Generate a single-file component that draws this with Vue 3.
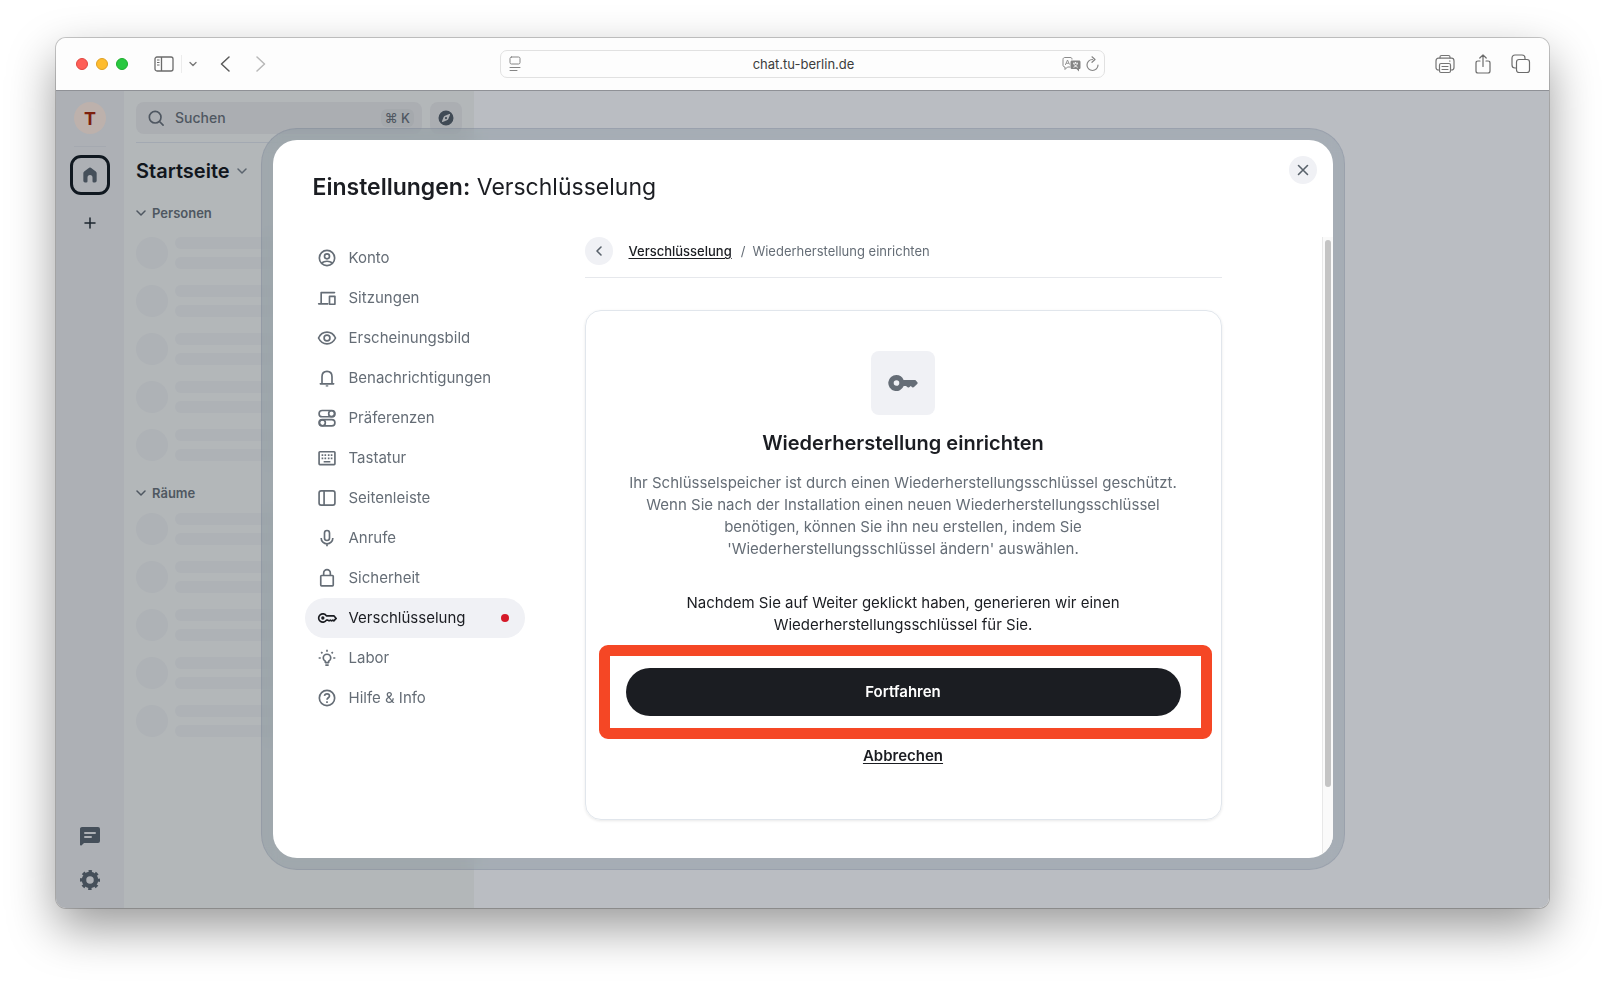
<template>
  <div class="desktop">
    <div class="browser">
      <header class="toolbar">
        <div class="toolbar-left">
          <span class="light red"></span>
          <span class="light yellow"></span>
          <span class="light green"></span>
          <button class="tool sidebar-toggle" aria-label="Seitenleiste einblenden">
            <svg width="20" height="16" viewBox="0 0 20 16" fill="none" stroke="#6b6b6b">
              <rect x="1" y="1" width="18" height="14" rx="2" stroke-width="1.3" />
              <path d="M7.5 1v14" stroke-width="1.3" />
              <path d="M3 4h2.500M3 6.500h2.500M3 9h2.500" />
            </svg>
          </button>
          <span class="separator"></span>
          <button class="tool group-menu" aria-label="Tabgruppen">
            <svg width="8" height="6" viewBox="0 0 8 6" fill="none" stroke="#7a7a7a" stroke-width="1.4" stroke-linecap="round" stroke-linejoin="round"><path d="M1 1.500l3 3 3-3" /></svg>
          </button>
          <button class="tool go-back" aria-label="Zurück">
            <svg width="10" height="16" viewBox="0 0 10 16" fill="none" stroke="#5a5a5a" stroke-width="1.5" stroke-linecap="round" stroke-linejoin="round"><path d="M9 1L1.500 8 9 15" /></svg>
          </button>
          <button class="tool" aria-label="Vorwärts">
            <svg width="10" height="16" viewBox="0 0 10 16" fill="none" stroke="#b8b8b8" stroke-width="1.5" stroke-linecap="round" stroke-linejoin="round"><path d="M1 1l7.500 7L1 15" /></svg>
          </button>
        </div>

        <div class="address-bar">
          <svg width="12" height="16" viewBox="0 0 12 16" fill="none" stroke="#858585" stroke-linecap="round"><rect x="1" y="1" width="10" height="7" rx="1.500" /><path d="M1 11.500h10M1 14.500h7" /></svg>
          <input type="text" value="chat.tu-berlin.de" aria-label="Adresse" />
          <svg width="19" height="16" viewBox="0 0 19 16" fill="none">
            <path d="M8 11H5.500L3 13.500V11C1.500 11 1 10 1 9V3.500C1 2 2 1.500 3 1.500h5c1.500 0 2 .5 2 2" stroke="#8a8a8a" />
            <path d="M3.300 9L5.500 4 7.500 8.500M4.200 7.300h2.600" stroke="#8a8a8a" stroke-width=".9" />
            <path d="M10 4.500h7c1 0 1.500.7 1.500 1.500v5.500c0 1-.5 1.500-1.500 1.500v2.500L14.500 13H10c-1 0-1.500-.6-1.500-1.500V6c0-.9.500-1.500 1.500-1.500z" fill="#858585" />
            <path d="M11 7.200h5M13.500 6v1.200M15.500 7.500c-.7 1.800-2 3-4 3.800M11.700 7.500c.7 1.800 2 3 4 3.800" stroke="#fff" stroke-width=".9" />
          </svg>
          <button class="tool reload" aria-label="Neu laden">
            <svg width="13" height="16" viewBox="0 0 13 16" fill="none" stroke="#858585" stroke-width="1.2" stroke-linecap="round" stroke-linejoin="round"><path d="M6.500 3.500a5.500 5.500 0 1 0 5.500 5.500M6 .8l3 2.700-3 2.800" /></svg>
          </button>
        </div>

        <div class="toolbar-right">
          <button class="tool" aria-label="Drucken">
            <svg width="20" height="20" viewBox="0 0 20 20" fill="none" stroke="#757575" stroke-width="1.200" stroke-linejoin="round" stroke-linecap="round">
              <path d="M5 4V3c0-1 .6-1.500 1.500-1.500h7c.9 0 1.500.5 1.500 1.500v1" />
              <path d="M4.500 16H3.500C2 16 1 15 1 13.500V7c0-1.700 1-2.800 2.500-2.800h13C18 4.200 19 5.300 19 7v6.500c0 1.500-1 2.500-2.500 2.500h-1" />
              <rect x="4.500" y="9.500" width="11" height="9" rx="1.500" />
              <path d="M7 12.500h6M7 15.500h6M14.500 7h.5" />
            </svg>
          </button>
          <button class="tool" aria-label="Teilen">
            <svg width="16" height="20" viewBox="0 0 16 20" fill="none" stroke="#6b6b6b" stroke-width="1.200" stroke-linejoin="round" stroke-linecap="round"><path d="M5 7H3C1.700 7 1 7.700 1 9v8c0 1.300.7 2 2 2h10c1.300 0 2-.7 2-2V9c0-1.300-.7-2-2-2h-2M8 12.500V1M4.800 4L8 .8 11.200 4" /></svg>
          </button>
          <button class="tool" aria-label="Tabübersicht">
            <svg width="20" height="20" viewBox="0 0 20 20" fill="none" stroke="#6b6b6b" stroke-width="1.200" stroke-linejoin="round"><path d="M5.500 14H4c-1.700 0-3-1.200-3-3V4c0-1.800 1.200-3 3-3h7c1.800 0 3 1.200 3 3v1.500" /><rect x="5.500" y="5.500" width="13" height="13" rx="2.500" /></svg>
          </button>
        </div>
      </header>

      <div class="app">
        <aside class="rail">
          <button class="avatar">T</button>
          <span class="rail-line"></span>
          <button class="space" aria-label="Startseite">
            <svg width="20" height="20" viewBox="0 0 24 24" fill="#454f5a"><path d="M11 3.400a1.700 1.700 0 0 1 2 0l6 4.500c.6.500 1 1.200 1 2V19a2 2 0 0 1-2 2h-1.500a1.500 1.500 0 0 1-1.500-1.500V15a3 3 0 0 0-6 0v4.500A1.500 1.500 0 0 1 7.500 21H6a2 2 0 0 1-2-2V9.900c0-.8.400-1.500 1-2z" /></svg>
          </button>
          <button class="add-space" aria-label="Space erstellen">
            <svg width="12" height="12" viewBox="0 0 12 12" stroke="#1d262f" stroke-width="1.500" stroke-linecap="round"><path d="M6 1v10M1 6h10" /></svg>
          </button>
          <div class="rail-bottom">
            <button aria-label="Threads">
              <svg width="24" height="24" viewBox="0 0 24 24" fill="#454f5a"><path fill-rule="evenodd" d="M4 3h16a2 2 0 0 1 2 2v12a2 2 0 0 1-2 2H6l-2.300 2.300c-.6.600-1.700.2-1.700-.7V5c0-1.100.9-2 2-2zm3 5a1 1 0 0 0 0 2h10a1 1 0 1 0 0-2zm0 4a1 1 0 0 0 0 2h6a1 1 0 1 0 0-2z" /></svg>
            </button>
            <button aria-label="Einstellungen">
              <svg width="24" height="24" viewBox="0 0 24 24" fill="none" stroke="#454f5a">
                <circle cx="12" cy="12" r="6" stroke-width="4.500" />
                <circle cx="12" cy="12" r="8.500" stroke-width="3" stroke-dasharray="3.340 3.336" stroke-dashoffset="1.670" />
              </svg>
            </button>
          </div>
        </aside>

        <aside class="room-panel">
          <div class="search-row">
            <button class="search">
              <svg width="20" height="20" viewBox="0 0 24 24" fill="none" stroke="#4f5761" stroke-width="2" stroke-linecap="round"><circle cx="11" cy="11" r="7" /><path d="M16.200 16.200L20.500 20.500" /></svg>
              <span>Suchen</span>
              <kbd>⌘ K</kbd>
            </button>
            <button class="explore" aria-label="Räume erkunden">
              <svg width="18" height="18" viewBox="0 0 24 24" fill="#404a55"><path fill-rule="evenodd" d="M12 2a10 10 0 1 1 0 20 10 10 0 0 1 0-20zm5.200 4.800c-.2-.2-.5-.3-.8-.2l-5.700 2.300c-.8.300-1.500 1-1.800 1.800l-2.300 5.700c-.2.700.3 1.200 1 1l5.700-2.300c.8-.3 1.500-1 1.800-1.800l2.300-5.700c.1-.3 0-.6-.2-.8zM12 10.500a1.500 1.500 0 1 1 0 3 1.500 1.500 0 0 1 0-3z" /></svg>
            </button>
          </div>
          <h1 class="panel-title">
            Startseite
            <svg width="12" height="8" viewBox="0 0 12 8" fill="none" stroke="#5b646e" stroke-width="1.500" stroke-linecap="round" stroke-linejoin="round"><path d="M2 2l4 4 4-4" /></svg>
          </h1>
          <section v-for="group in groups" :key="group" class="room-group">
            <h2>
              <svg width="10" height="8" viewBox="0 0 10 8" fill="none" stroke="#4f5761" stroke-width="1.500" stroke-linecap="round" stroke-linejoin="round"><path d="M1 2l4 4 4-4" /></svg>
              {{ group }}
            </h2>
            <div v-for="n in 5" :key="n" class="skeleton">
              <span class="skeleton-avatar"></span>
              <span class="skeleton-lines"><i></i><i></i></span>
            </div>
          </section>
        </aside>

        <main class="room-view"></main>

        <div class="overlay">
          <div class="dialog-frame">
            <div class="dialog" role="dialog" aria-labelledby="dialog-title">
              <h2 id="dialog-title" class="dialog-title"><strong>Einstellungen:</strong> Verschlüsselung</h2>
              <button class="round-btn close-btn" aria-label="Schließen">
                <svg width="12" height="12" viewBox="0 0 12 12" fill="none" stroke="#59626b" stroke-width="1.600" stroke-linecap="round"><path d="M1.500 1.500l9 9M10.500 1.500l-9 9" /></svg>
              </button>

              <div class="dialog-body">
                <nav class="tabs">
                  <button v-for="tab in tabs" :key="tab.label" class="tab" :class="{ active: tab.active }">
                    <svg width="20" height="20" viewBox="0 0 24 24" fill="none" stroke="currentColor" stroke-width="2" stroke-linejoin="round" v-html="tab.icon"></svg>
                    <span>{{ tab.label }}</span>
                    <span v-if="tab.active" class="dot"></span>
                  </button>
                </nav>

                <div class="content">
                  <div class="breadcrumb">
                    <button class="round-btn" aria-label="Zurück">
                      <svg width="8" height="12" viewBox="0 0 8 12" fill="none" stroke="#59626b" stroke-width="1.600" stroke-linecap="round" stroke-linejoin="round"><path d="M6 2L2 6l4 4" /></svg>
                    </button>
                    <a href="#">Verschlüsselung</a>
                    <span class="slash">/</span>
                    <span>Wiederherstellung einrichten</span>
                  </div>

                  <div class="card">
                    <div class="key-tile">
                      <svg width="32" height="32" viewBox="0 0 32 32" fill="#656d76"><path fill-rule="evenodd" d="M9.300 8a8 8 0 0 1 7.300 5h11.200c.4 0 .7.100 1 .4l1.400 1.500c.6.600.6 1.400 0 2L27 20.100c-.5.500-1.300.5-1.800.1L23.800 19l-1.600 1.300c-.5.400-1.100.4-1.600 0L19 19h-2.300A8 8 0 1 1 9.300 8zm.2 5.200a2.800 2.800 0 1 0 0 5.600 2.800 2.800 0 0 0 0-5.600z" /></svg>
                    </div>
                    <h3>Wiederherstellung einrichten</h3>
                    <p class="description">
                      Ihr Schlüsselspeicher ist durch einen Wiederherstellungsschlüssel geschützt. Wenn Sie nach der Installation einen neuen Wiederherstellungsschlüssel benötigen, können Sie ihn neu erstellen, indem Sie 'Wiederherstellungsschlüssel ändern' auswählen.
                    </p>
                    <p class="hint">Nachdem Sie auf Weiter geklickt haben, generieren wir einen Wiederherstellungsschlüssel für Sie.</p>
                    <div class="highlight">
                      <button class="primary">Fortfahren</button>
                    </div>
                    <button class="cancel">Abbrechen</button>
                  </div>
                </div>

                <div class="scrollbar"><span class="thumb"></span></div>
              </div>
            </div>
          </div>
        </div>
      </div>
    </div>
  </div>
</template>

<script setup>
const groups = ["Personen", "Räume"];

const tabs = [
  {
    label: "Konto",
    icon: '<circle cx="12" cy="12" r="9.200"/><circle cx="12" cy="10" r="3"/><path d="M5.500 18c3.500-2.800 9.500-2.800 13 0"/>',
  },
  {
    label: "Sitzungen",
    icon: '<path d="M5 18V5.500h16M2 19h11" stroke-linecap="round"/><rect x="15" y="10" width="6.500" height="9.500"/>',
  },
  {
    label: "Erscheinungsbild",
    icon: '<path d="M1.800 12C4 7.500 7.700 5 12 5s8 2.500 10.200 7C20 16.500 16.300 19 12 19s-8-2.500-10.200-7z"/><circle cx="12" cy="12" r="3.500"/>',
  },
  {
    label: "Benachrichtigungen",
    icon: '<path d="M4 19h16M6 19v-8.500C6 6.500 8.500 4 12 4s6 2.500 6 6.500V19" stroke-linecap="round"/><path d="M10.500 21.500h3" stroke-width="1.500"/>',
  },
  {
    label: "Präferenzen",
    icon: '<rect x="2.500" y="3" width="19" height="7.500" rx="3.750"/><circle cx="17.500" cy="6.750" r="3.500"/><rect x="2.500" y="14" width="19" height="7.500" rx="3.750"/><circle cx="6.500" cy="17.750" r="3.500"/>',
  },
  {
    label: "Tastatur",
    icon: '<rect x="2.500" y="4.500" width="19" height="15.500" rx="1"/><path d="M5.500 8.500h2m1.500 0h2m2 0h2m1.500 0h2M5.500 12.500h2m1.500 0h2m2 0h2m1.500 0h2M8 16.500h8"/>',
  },
  {
    label: "Seitenleiste",
    icon: '<rect x="2.500" y="3.500" width="19" height="17" rx="2.500"/><path d="M8.500 3.500v17"/>',
  },
  {
    label: "Anrufe",
    icon: '<rect x="9" y="3" width="6" height="12" rx="3"/><path d="M5 12a7 7 0 0 0 14 0M12 19v3"/>',
  },
  {
    label: "Sicherheit",
    icon: '<rect x="4.500" y="9" width="15" height="12.500" rx="1"/><path d="M8 9V6a4 4 0 0 1 8 0v3"/>',
  },
  {
    label: "Verschlüsselung",
    icon: '<path d="M11.300 9.500a5 5 0 1 0 0 5h1.700l1.500 1 1.500-1 1.500 1 1.500-1 1.200 1L23 12.500 20.500 9.500z"/><circle cx="7" cy="12" r="2" fill="currentColor" stroke="none"/>',
    active: true,
  },
  {
    label: "Labor",
    icon: '<path d="M10 17.500v-1.700C8.500 15 7.500 13.700 7.500 12a4.500 4.500 0 0 1 9 0c0 1.700-1 3-2.500 3.800v1.700zM10 20.500h4M12 2v2.500M2 12h2.500M19.500 12H22M5 5l1.500 1.500M19 5l-1.500 1.500"/>',
  },
  {
    label: "Hilfe & Info",
    icon: '<circle cx="12" cy="12" r="9.200"/><path d="M9 9.500c.2-1.500 1.400-2.500 3-2.500s3 1.100 3 2.600c0 2-3 2.200-3 4.400M12 16v2"/>',
  },
];
</script>

<style>
body {
  margin: 0;
  background: #fff;
}
</style>

<style scoped>
.desktop {
  box-sizing: border-box;
  min-height: 100vh;
  padding: 38px 56px 74px;
  display: flex;
  font-family: Inter, "Liberation Sans", sans-serif;
  color: #1b1d22;
}

.desktop * {
  box-sizing: border-box;
}

button {
  border: none;
  background: none;
  padding: 0;
  margin: 0;
  font: inherit;
  color: inherit;
  cursor: pointer;
}

svg {
  display: block;
  flex: none;
}

h1,
h2,
h3,
p {
  margin: 0;
}

.browser {
  flex: 1;
  min-width: 0;
  display: flex;
  flex-direction: column;
  border-radius: 10px;
  overflow: hidden;
  box-shadow: 0 0 0 1px rgba(0, 0, 0, 0.2), 0 20px 48px rgba(0, 0, 0, 0.4);
}

/* browser chrome */
.toolbar {
  height: 53px;
  display: grid;
  grid-template-columns: 1fr minmax(200px, 605px) 1fr;
  align-items: center;
  background: #fdfdfd;
  border-bottom: 1px solid #8f9196;
}

.toolbar-left,
.toolbar-right {
  display: flex;
  align-items: center;
}

.toolbar-left {
  padding-left: 20px;
}

.toolbar-right {
  justify-content: flex-end;
  gap: 20px;
  padding-right: 18px;
}

.light {
  width: 12px;
  height: 12px;
  margin-right: 8px;
  border-radius: 50%;
}

.red {
  background: #fe5f57;
  border: 1px solid #e14640;
}

.yellow {
  background: #febc2e;
  border: 1px solid #dfa023;
}

.green {
  background: #28c840;
  border: 1px solid #1dad2c;
}

.sidebar-toggle {
  margin-left: 18px;
}

.separator {
  width: 1px;
  height: 18px;
  margin: 0 7px;
  background: #ececec;
}

.go-back {
  margin: 0 26px 0 23px;
}

.address-bar {
  height: 28px;
  display: flex;
  align-items: center;
  padding: 0 5px 0 8px;
  border: 1px solid #e1e1e1;
  border-radius: 7px;
}

.address-bar input {
  flex: 1;
  min-width: 0;
  padding: 0 0 0 24px;
  border: none;
  outline: none;
  background: none;
  text-align: center;
  font: 13px Inter, sans-serif;
  color: #3c3c3c;
}

.reload {
  margin-left: 5px;
}

/* chat client */
.app {
  position: relative;
  flex: 1;
  display: flex;
  background: #babdc2;
}

.rail {
  width: 68px;
  display: flex;
  flex-direction: column;
  align-items: center;
  padding: 11px 0 16px;
  background: #adb0b5;
}

.avatar {
  width: 32px;
  height: 32px;
  border-radius: 50%;
  background: #bdb1ac;
  color: #7d1f0c;
  font-size: 18px;
  font-weight: 700;
}

.rail-line {
  width: 32px;
  height: 1px;
  margin: 12px 0 8px;
  background: #a5a9b0;
}

.space {
  width: 40px;
  height: 40px;
  display: flex;
  align-items: center;
  justify-content: center;
  border: 3px solid #101820;
  border-radius: 11px;
}

.add-space {
  margin-top: 22px;
}

.rail-bottom {
  margin-top: auto;
  display: flex;
  flex-direction: column;
  gap: 20px;
}

.room-panel {
  width: 350px;
  padding: 11px 12px;
  background: #b3b7b9;
}

.search-row {
  display: flex;
  gap: 8px;
  padding-bottom: 8px;
  border-bottom: 1px solid #a3a9b2;
}

.search {
  flex: 1;
  height: 32px;
  display: flex;
  align-items: center;
  gap: 9px;
  padding: 0 8px 0 10px;
  border-radius: 8px;
  background: #abaeb2;
  color: #4f5761;
  font-size: 14px;
  line-height: 18px;
  font-weight: 500;
}

.search kbd {
  margin-left: auto;
  padding: 0 4px;
  border-radius: 6px;
  background: #a5a9ad;
  font: 500 13px/18px Inter, "DejaVu Sans", sans-serif;
}

.explore {
  width: 32px;
  height: 32px;
  display: flex;
  align-items: center;
  justify-content: center;
  border-radius: 8px;
  background: #abaeb2;
}

.panel-title {
  display: flex;
  align-items: center;
  gap: 6px;
  height: 56px;
  font-size: 20px;
  font-weight: 600;
  color: #11161d;
}

.room-group {
  margin-bottom: 18px;
}

.room-group h2 {
  display: flex;
  align-items: center;
  gap: 6px;
  height: 28px;
  margin-bottom: 10px;
  font-size: 13px;
  font-weight: 600;
  color: #4f5761;
}

.room-group + .room-group h2 {
  margin-bottom: 6px;
}

.skeleton {
  display: flex;
  gap: 7px;
  margin-bottom: 16px;
}

.skeleton-avatar {
  width: 32px;
  height: 32px;
  border-radius: 50%;
  background: #aeb2b6;
}

.skeleton-lines {
  flex: 1;
  display: flex;
  flex-direction: column;
  justify-content: space-between;
}

.skeleton-lines i {
  height: 12px;
  border-radius: 6px;
  background: #aeb2b6;
}

.room-view {
  flex: 1;
}

/* settings dialog */
.overlay {
  position: absolute;
  inset: 0;
  display: flex;
  justify-content: center;
  padding: 37px 37px 38px;
}

.dialog-frame {
  width: 100%;
  max-width: 1084px;
  display: flex;
  padding: 11px;
  border: 1px solid rgba(60, 80, 110, 0.25);
  border-radius: 36px;
  background: rgba(52, 88, 110, 0.15);
  background-clip: padding-box;
  backdrop-filter: blur(10px);
}

.dialog {
  position: relative;
  flex: 1;
  min-width: 0;
  display: flex;
  flex-direction: column;
  overflow: hidden;
  border-radius: 24px;
  background: #fff;
}

.dialog-title {
  height: 97px;
  padding: 30px 40px 0;
  font-size: 23px;
  line-height: 34px;
  font-weight: 400;
}

.dialog-title strong {
  font-weight: 600;
}

.round-btn {
  width: 28px;
  height: 28px;
  display: flex;
  align-items: center;
  justify-content: center;
  flex: none;
  border-radius: 50%;
  background: #f0f1f5;
}

.close-btn {
  position: absolute;
  top: 16px;
  right: 16px;
}

.dialog-body {
  flex: 1;
  display: flex;
}

.tabs {
  width: 252px;
  flex: none;
  padding: 1px 0 0 32px;
}

.tab {
  width: 100%;
  height: 40px;
  display: flex;
  align-items: center;
  gap: 12px;
  padding: 0 16px 0 12px;
  border-radius: 20px;
  font-size: 15px;
  line-height: 20px;
  color: #656d76;
}

.tab.active {
  background: #f0f1f5;
  color: #1b1d22;
}

.dot {
  width: 8px;
  height: 8px;
  margin-left: auto;
  border-radius: 50%;
  background: #d51928;
}

.content {
  flex: 1;
  min-width: 0;
  padding: 0 100px 38px 60px;
  display: flex;
  flex-direction: column;
}

.breadcrumb {
  display: flex;
  align-items: center;
  padding-bottom: 12px;
  border-bottom: 1px solid #e6e8ec;
  font-size: 13px;
  line-height: 18px;
  color: #656d76;
}

.breadcrumb a {
  margin-left: 16px;
  color: #1b1d22;
  font-weight: 500;
  text-underline-offset: 2px;
}

.slash {
  margin: 0 7px 0 9px;
}

.card {
  flex: 1;
  display: flex;
  flex-direction: column;
  align-items: center;
  margin-top: 32px;
  padding: 40px 13px 0;
  border: 1px solid #e1e6ec;
  border-radius: 16px;
  box-shadow: 0 1px 3px rgba(27, 29, 34, 0.1);
  text-align: center;
  font-size: 15px;
  line-height: 22px;
}

.key-tile {
  width: 64px;
  height: 64px;
  display: flex;
  align-items: center;
  justify-content: center;
  border-radius: 8px;
  background: #f0f1f5;
}

.card h3 {
  margin: 14px 0 15px;
  font-size: 20px;
  line-height: 28px;
  font-weight: 600;
}

.description {
  max-width: 555px;
  color: #656d76;
}

.hint {
  max-width: 460px;
  margin: 32px 0 9px;
}

/* marker frame, reaches a little further out on the right */
.highlight {
  align-self: stretch;
  margin-right: -4px;
  padding: 12px 20px 12px 16px;
  border: 11px solid #f54725;
  border-radius: 9px;
}

.primary {
  width: 100%;
  height: 48px;
  border-radius: 24px;
  background: #1b1d22;
  color: #fff;
  font-weight: 600;
}

.cancel {
  margin-top: 6px;
  font-weight: 600;
  text-decoration: underline;
  text-decoration-thickness: 1px;
  text-underline-offset: 2px;
}

.scrollbar {
  width: 11px;
  padding: 3px 2px;
  border-left: 1px solid #e8e8e8;
  background: #fafafa;
}

.thumb {
  display: block;
  width: 6px;
  height: 89%;
  margin-left: auto;
  border-radius: 3px;
  background: #c4c4c4;
}
</style>
